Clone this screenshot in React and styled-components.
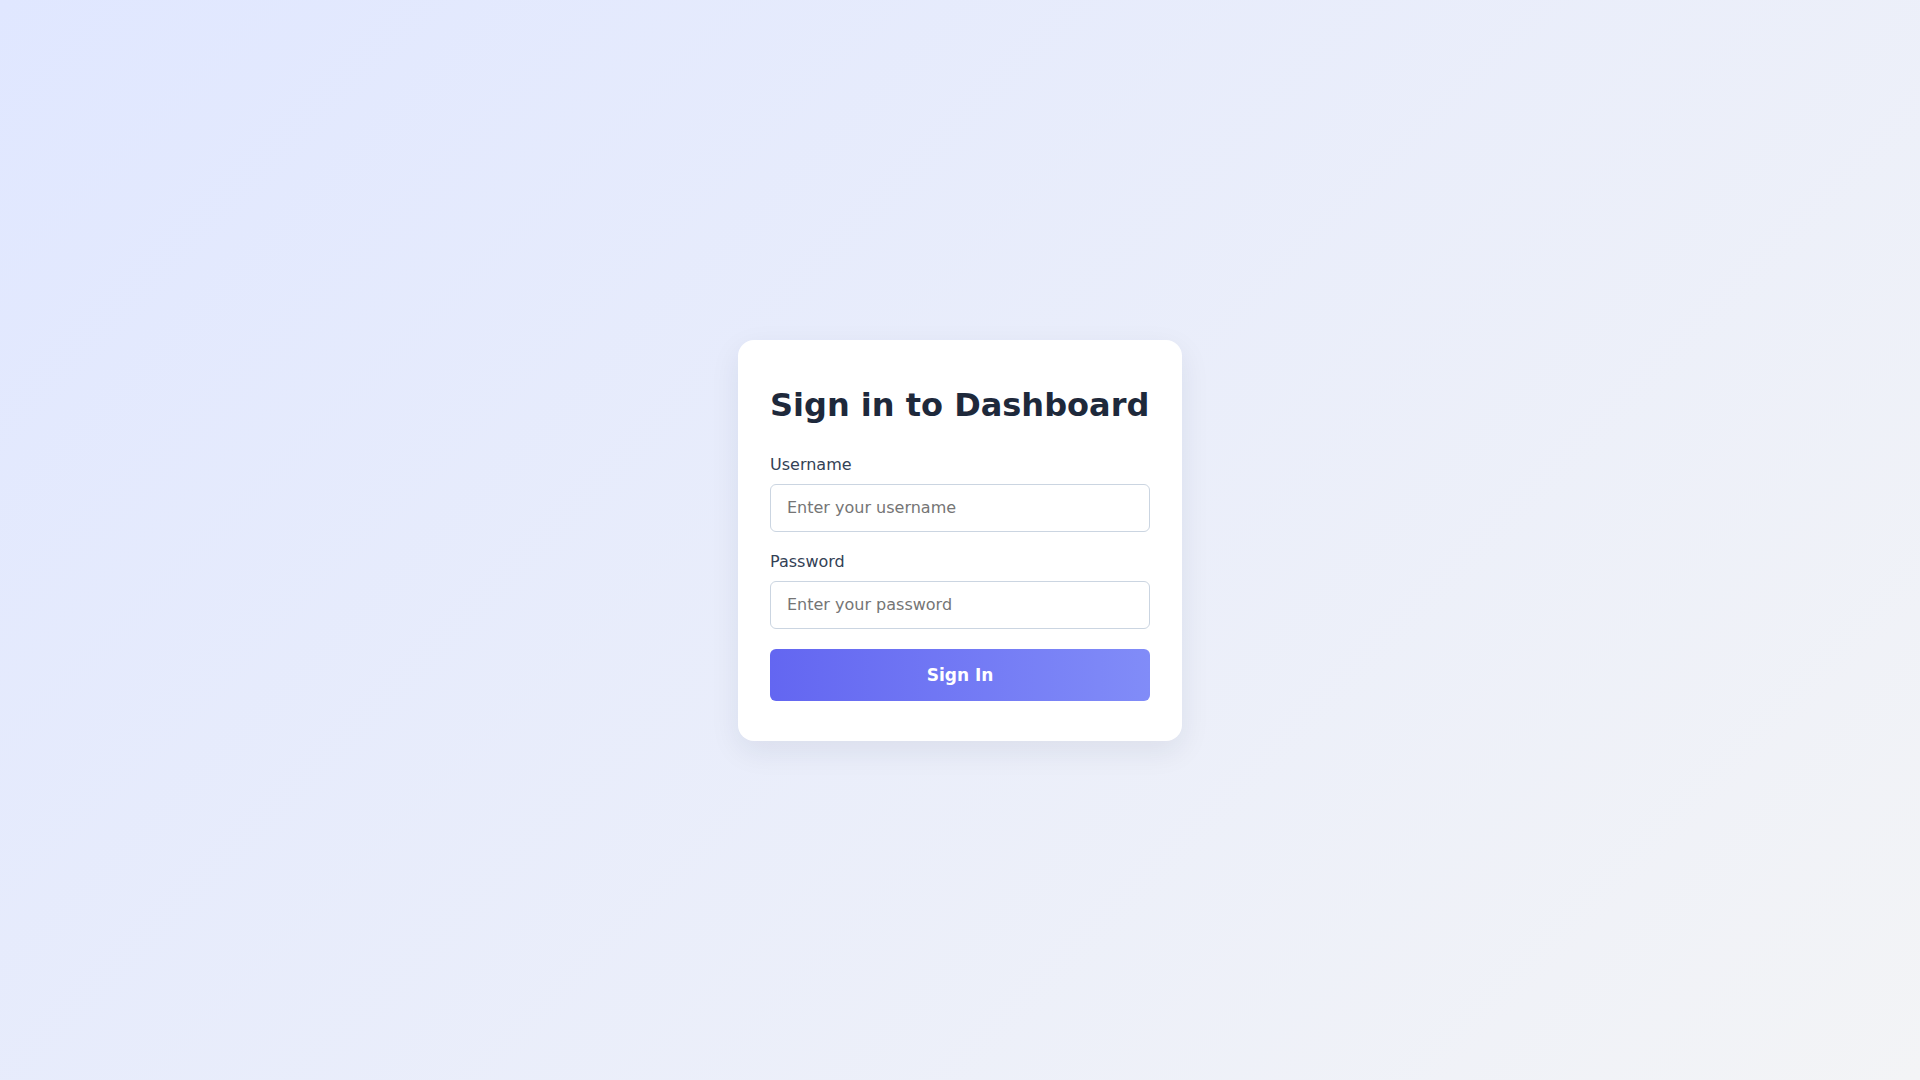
import styled, { createGlobalStyle } from 'styled-components';

const GlobalStyle = createGlobalStyle`
  * {
    box-sizing: border-box;
  }

  body {
    margin: 0;
    font-family: 'DejaVu Sans', sans-serif;
  }
`;

const Page = styled.div`
  display: flex;
  justify-content: center;
  align-items: center;
  min-height: 100vh;
  background: linear-gradient(135deg, #e0e7ff 0%, #f3f4f6 100%);
`;

const Card = styled.form`
  display: flex;
  flex-direction: column;
  width: 444px;
  padding: 46px 32px 40px;
  background: #ffffff;
  border-radius: 16px;
  box-shadow: 0 10px 30px rgba(30, 41, 59, 0.08);
`;

const Title = styled.h1`
  margin: 0 0 31px;
  font-size: 32px;
  font-weight: 700;
  line-height: normal;
  color: #1e293b;
`;

const Field = styled.div`
  display: flex;
  flex-direction: column;
  margin-bottom: 20px;
`;

const Label = styled.label`
  margin-bottom: 10px;
  font-size: 16px;
  color: #334155;
`;

const Input = styled.input`
  width: 100%;
  height: 48px;
  padding: 0 16px;
  border: 1px solid #cbd5e1;
  border-radius: 6px;
  font-family: inherit;
  font-size: 16px;
  color: #1e293b;
  outline: none;

  &::placeholder {
    color: #757575;
  }

  &:focus {
    border-color: #6366f1;
  }
`;

const Button = styled.button`
  height: 52px;
  border: none;
  border-radius: 6px;
  background: linear-gradient(90deg, #6366f1 0%, #818cf8 100%);
  font-family: inherit;
  font-size: 17px;
  font-weight: 700;
  color: #ffffff;
  cursor: pointer;
`;

const App = () => {
  return (
    <Page>
      <GlobalStyle />
      <Card onSubmit={(e) => e.preventDefault()}>
        <Title>Sign in to Dashboard</Title>
        <Field>
          <Label htmlFor='username'>Username</Label>
          <Input id='username' type='text' placeholder='Enter your username' />
        </Field>
        <Field>
          <Label htmlFor='password'>Password</Label>
          <Input id='password' type='password' placeholder='Enter your password' />
        </Field>
        <Button type='submit'>Sign In</Button>
      </Card>
    </Page>
  );
};

export default App;
